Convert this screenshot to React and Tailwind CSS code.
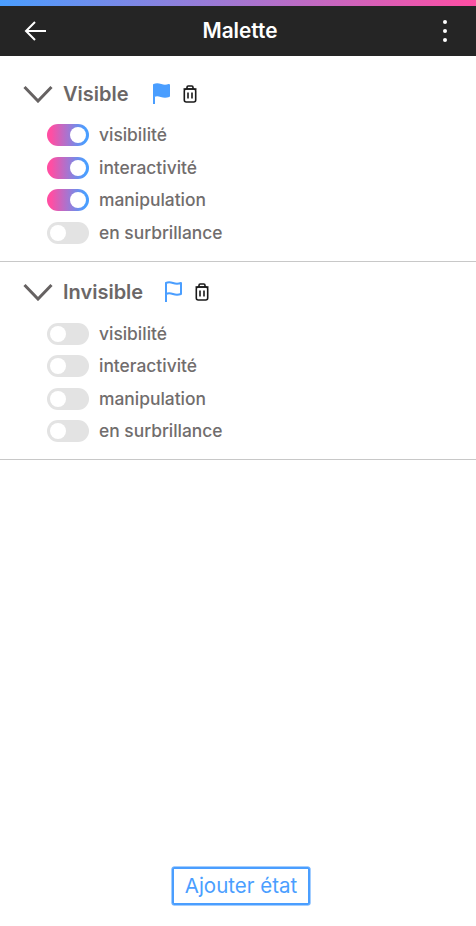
const ROWS_ON = [
  { label: "visibilité", on: true },
  { label: "interactivité", on: true },
  { label: "manipulation", on: true },
  { label: "en surbrillance", on: false },
];

const ROWS_OFF = [
  { label: "visibilité", on: false },
  { label: "interactivité", on: false },
  { label: "manipulation", on: false },
  { label: "en surbrillance", on: false },
];

function Toggle({ on }) {
  return (
    <div
      className={
        on
          ? "flex h-[22px] w-[42px] items-center justify-end rounded-full bg-[linear-gradient(to_right,#ff4ea3_10%,#4a9eff_90%)] pr-[3px]"
          : "flex h-[22px] w-[42px] items-center justify-start rounded-full bg-[#e3e3e3] pl-[3px]"
      }
    >
      <div className="h-4 w-4 rounded-full bg-white" />
    </div>
  );
}

function Flag({ filled }) {
  return (
    <svg width="20" height="22" viewBox="0 0 20 22" fill={filled ? "#4a9eff" : "none"} stroke="#4a9eff" strokeWidth="2">
      <path d="M2 21V2c2-1 4-1 7 0s5 1 8 0v11c-3 1-5 1-8 0s-5-1-7 0" strokeLinejoin="round" />
    </svg>
  );
}

function Trash() {
  return (
    <svg width="14" height="18" viewBox="0 0 14 18" fill="none" stroke="#1a1a1a" strokeWidth="1.6">
      <rect x="1.3" y="4" width="11.4" height="13" rx="2" />
      <path d="M4 4V2.2C4 1.5 4.5 1 5.2 1h3.6c.7 0 1.2.5 1.2 1.2V4M0.5 4h13M5 7.5v6M9 7.5v6" />
    </svg>
  );
}

function Section({ title, filled, rows, iconGap }) {
  return (
    <section className="border-b border-[#c8c8c8] pb-[17px] pl-[23px]">
      <div className="flex h-[61px] items-center">
        <svg width="30" height="18" viewBox="0 0 30 18" fill="none" stroke="#666262" strokeWidth="3" className="mr-[10px]">
          <path d="M1.5 2 15 16 28.5 2" />
        </svg>
        <span className="text-xl font-semibold text-[#6b6767]">{title}</span>
        <div className={iconGap}>
          <Flag filled={filled} />
        </div>
        <div className="ml-[11px] flex items-center">
          <Trash />
        </div>
      </div>
      <div className="flex flex-col gap-[10.5px] pl-6">
        {rows.map((row) => (
          <div key={row.label} className="flex items-center gap-[10px]">
            <Toggle on={row.on} />
            <span className="text-[17.4px] font-medium leading-[22px] text-[#716d6d]">{row.label}</span>
          </div>
        ))}
      </div>
    </section>
  );
}

export default function App() {
  return (
    <div className="flex h-[926px] w-[476px] flex-col bg-white font-['Inter',sans-serif]">
      <div className="h-[6px] bg-[linear-gradient(to_right,#4a9eff,#ff4ea3)]" />
      <header className="flex h-[50px] items-center justify-between bg-[#252525] pl-[24px] pr-[29px]">
        <svg width="23" height="22" viewBox="0 0 23 22" fill="none" stroke="white" strokeWidth="2">
          <path d="M22 11H2M11 2l-9 9 9 9" />
        </svg>
        <h1 className="text-[20.8px] font-semibold text-white">Malette</h1>
        <div className="flex w-[14px] flex-col items-end gap-[5px]">
          <div className="h-1 w-1 rounded-full bg-white" />
          <div className="h-1 w-1 rounded-full bg-white" />
          <div className="h-1 w-1 rounded-full bg-white" />
        </div>
      </header>
      <main className="pt-[7px]">
        <Section title="Visible" filled rows={ROWS_ON} iconGap="ml-[23px] flex items-center" />
        <Section title="Invisible" filled={false} rows={ROWS_OFF} iconGap="ml-[21px] flex items-center" />
      </main>
      <div className="mt-auto flex justify-center pb-[21px] pl-[6px]">
        <button className="h-[38px] w-[138px] rounded-[2px] border-2 border-[#4a9eff] text-[20.5px] text-[#4a9eff] shadow-[0_0_0_0.5px_#4a9eff]">
          Ajouter état
        </button>
      </div>
    </div>
  );
}
